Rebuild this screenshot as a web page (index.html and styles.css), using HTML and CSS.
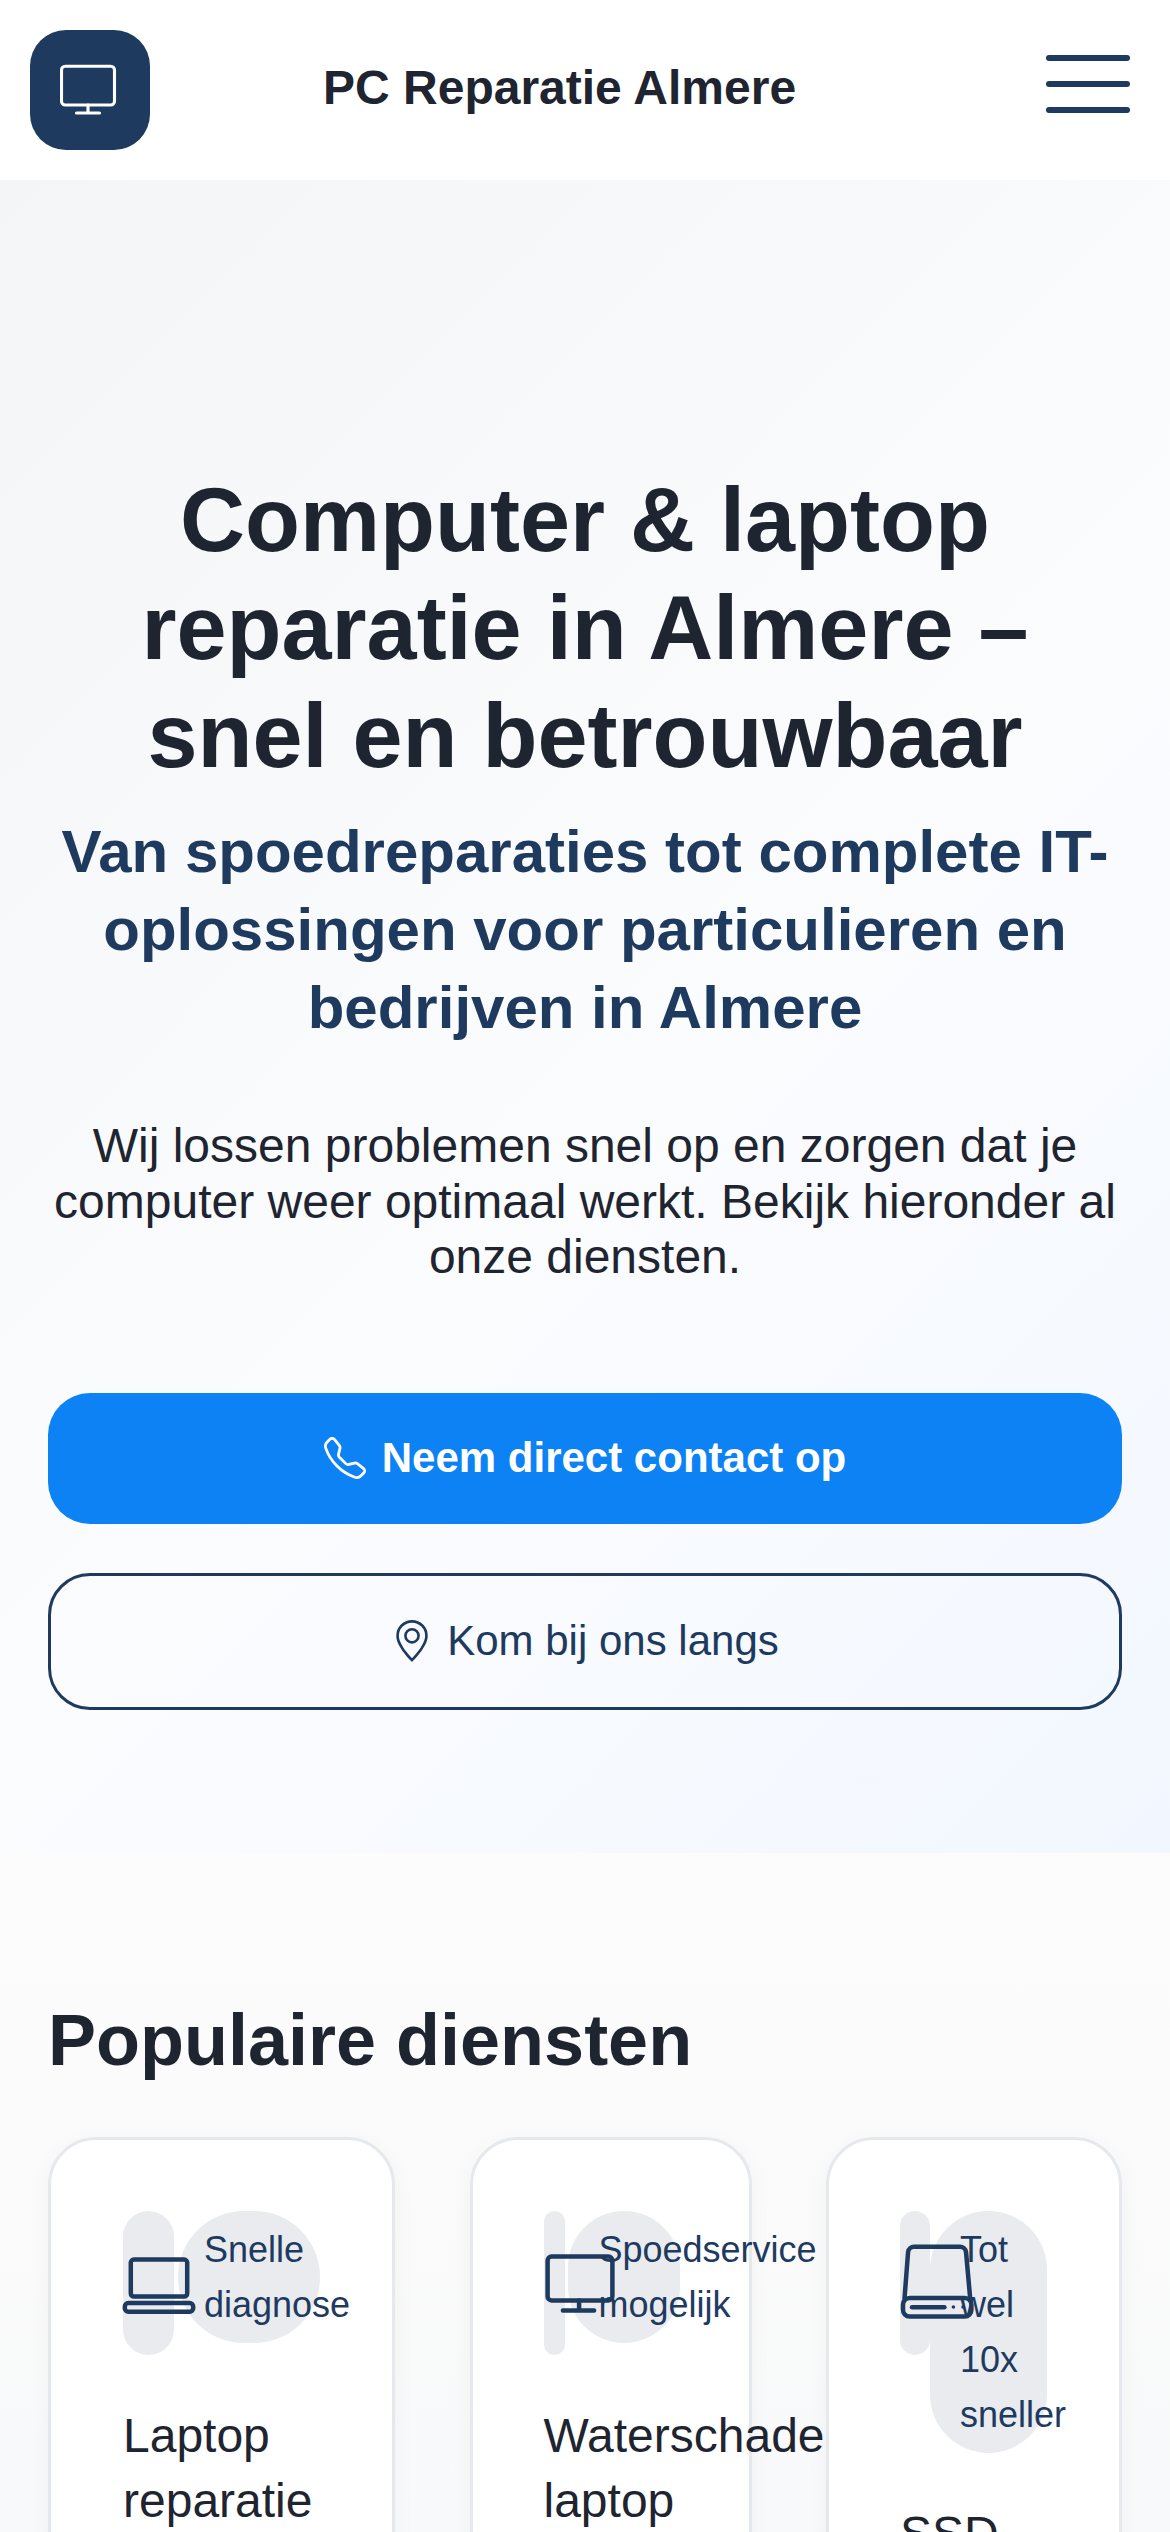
FILE: index.html
```html
<!DOCTYPE html>
<html lang="nl">
<head>
    <meta charset="UTF-8">
    <meta name="viewport" content="width=device-width, initial-scale=1">
    <title>PC Reparatie Almere</title>
    <link rel="stylesheet" href="styles.css">
</head>
<body>
    <div class="page">
        <!-- Header -->
        <header class="site-header">
            <a class="logo" href="#">
                <svg class="logo-icon" viewBox="0 0 24 24">
                    <rect x="0.6" y="2.5" width="21.2" height="15.5" rx="1.5"/>
                    <path d="M11.2 18v3.2M6.6 21.2h9.2"/>
                </svg>
            </a>
            <span class="site-title">PC Reparatie Almere</span>
            <button class="burger" type="button" aria-label="Menu">
                <span></span>
                <span></span>
                <span></span>
            </button>
        </header>

        <!-- Hero -->
        <section class="hero">
            <h1>Computer &amp; laptop reparatie in Almere – snel en betrouwbaar</h1>
            <h2 class="hero-sub">Van spoedreparaties tot complete IT-oplossingen voor particulieren en bedrijven in Almere</h2>
            <p class="hero-text">Wij lossen problemen snel op en zorgen dat je computer weer optimaal werkt. Bekijk hieronder al onze diensten.</p>
            <a class="btn btn-primary" href="#">
                <svg class="btn-icon" viewBox="0 0 16 16" fill="currentColor">
                    <path d="M3.654 1.328a.678.678 0 0 0-1.015-.063L1.605 2.3c-.483.484-.661 1.169-.45 1.77a17.6 17.6 0 0 0 4.168 6.608 17.6 17.6 0 0 0 6.608 4.168c.601.211 1.286.033 1.77-.45l1.034-1.034a.678.678 0 0 0-.063-1.015l-2.307-1.794a.68.68 0 0 0-.58-.122l-2.19.547a1.75 1.75 0 0 1-1.657-.459L5.482 8.062a1.75 1.75 0 0 1-.46-1.657l.548-2.19a.68.68 0 0 0-.122-.58zM1.884.511a1.745 1.745 0 0 1 2.612.163L6.29 2.98c.329.423.445.974.315 1.494l-.547 2.19a.68.68 0 0 0 .178.643l2.457 2.457a.68.68 0 0 0 .644.178l2.189-.547a1.75 1.75 0 0 1 1.494.315l2.306 1.794c.829.645.905 1.87.163 2.611l-1.034 1.034c-.74.74-1.846 1.065-2.877.702a18.6 18.6 0 0 1-7.01-4.42 18.6 18.6 0 0 1-4.42-7.009c-.362-1.03-.037-2.137.703-2.877z"/>
                </svg>
                Neem direct contact op
            </a>
            <a class="btn btn-outline" href="#">
                <svg class="btn-icon" viewBox="0 0 16 16" fill="currentColor">
                    <path d="M12.166 8.94c-.524 1.062-1.234 2.12-1.96 3.07A32 32 0 0 1 8 14.58a32 32 0 0 1-2.206-2.57c-.726-.95-1.436-2.008-1.96-3.07C3.304 7.867 3 6.862 3 6a5 5 0 0 1 10 0c0 .862-.305 1.867-.834 2.94M8 16s6-5.686 6-10A6 6 0 0 0 2 6c0 4.314 6 10 6 10"/>
                    <path d="M8 8a2 2 0 1 1 0-4 2 2 0 0 1 0 4m0 1a3 3 0 1 0 0-6 3 3 0 0 0 0 6"/>
                </svg>
                Kom bij ons langs
            </a>
        </section>

        <!-- Diensten -->
        <section class="services">
            <h2 class="section-title">Populaire diensten</h2>
            <div class="card-grid">
                <article class="card card-laptop">
                    <div class="card-top">
                        <div class="icon-box">
                            <svg class="card-icon" viewBox="0 0 24 24">
                                <rect x="2.6" y="4.2" width="18.8" height="12.3" rx="1"/>
                                <rect x="0.6" y="18.7" width="22.8" height="2.9" rx="1.2"/>
                            </svg>
                        </div>
                        <span class="badge">Snelle diagnose</span>
                    </div>
                    <h3>Laptop reparatie</h3>
                </article>

                <article class="card card-water">
                    <div class="card-top">
                        <div class="icon-box">
                            <svg class="card-icon" viewBox="0 0 24 24">
                                <rect x="1.2" y="3.2" width="21.6" height="14.6" rx="1.3"/>
                                <path d="M11.7 17.8v3.4M6.3 21.2h10.4"/>
                            </svg>
                        </div>
                        <span class="badge">Spoedservice mogelijk</span>
                    </div>
                    <h3>Waterschade laptop</h3>
                </article>

                <article class="card card-ssd">
                    <div class="card-top">
                        <div class="icon-box">
                            <svg class="card-icon" viewBox="0 0 24 24">
                                <path d="M1.5 17.2 2.7 1.6A2 2 0 0 1 4.7-.1H20a2 2 0 0 1 2 1.7l1.4 15.6"/>
                                <rect x="1" y="17" width="22.8" height="6.2" rx="2.2"/>
                                <path d="M4 20.1h10.8"/>
                                <circle class="dot" cx="17.8" cy="20" r="0.6"/>
                                <circle class="dot" cx="21" cy="20" r="0.6"/>
                            </svg>
                        </div>
                        <span class="badge">Tot wel 10x sneller</span>
                    </div>
                    <h3>SSD upgrade</h3>
                </article>
            </div>
        </section>
    </div>
</body>
</html>
```

FILE: styles.css
```css
html, body {
    margin: 0;
    padding: 0;
}
body {
    font-family: "Liberation Sans", Arial, sans-serif;
    color: #1f2530;
    background-color: #fff;
}
a {
    text-decoration: none;
}
.page {
    height: 2532px;
    overflow: hidden;
}

/* Header */
.site-header {
    display: flex;
    align-items: center;
    height: 180px;
    box-sizing: border-box;
    padding: 0 40px 0 30px;
    background-color: #fff;
}
.logo {
    display: flex;
    align-items: center;
    justify-content: center;
    width: 120px;
    height: 120px;
    border-radius: 36px;
    background-color: #1e3a5f;
}
.logo-icon {
    width: 60px;
    height: 60px;
    fill: none;
    stroke: #fff;
    stroke-width: 1.25;
    stroke-linecap: round;
}
.site-title {
    margin: 0 0 6px 173px;
    font-size: 48px;
    font-weight: bold;
}
.burger {
    display: flex;
    flex-direction: column;
    gap: 20px;
    margin: 0 0 12px auto;
    padding: 0;
    border: none;
    background: none;
}
.burger span {
    display: block;
    width: 84px;
    height: 6px;
    border-radius: 3px;
    background-color: #1e3a5f;
}

/* Hero */
.hero {
    box-sizing: border-box;
    height: 1673px;
    padding: 286px 48px 0;
    text-align: center;
    background: linear-gradient(135deg, #f3f5f6 0%, #fbfcfe 55%, #f2f7ff 100%);
}
.hero h1 {
    margin: 0 0 23px;
    font-size: 90px;
    line-height: 108px;
    font-weight: bold;
}
.hero-sub {
    margin: 0 0 71px;
    font-size: 60px;
    line-height: 78px;
    font-weight: bold;
    color: #1e3a5f;
}
.hero-text {
    margin: 0 0 108px;
    font-size: 48px;
    line-height: 55.5px;
}
.btn {
    display: flex;
    align-items: center;
    justify-content: center;
    box-sizing: border-box;
    border-radius: 42px;
    font-size: 42px;
}
.btn-primary {
    height: 131px;
    margin-bottom: 49px;
    gap: 16px;
    background-color: #0d82f5;
    color: #fff;
    font-weight: bold;
}
.btn-outline {
    height: 137px;
    gap: 14px;
    border: 3px solid #1e3a5f;
    color: #1e3a5f;
}
.btn-icon {
    width: 42px;
    height: 42px;
}

/* Diensten */
.services {
    padding: 144px 48px 0;
    background: linear-gradient(180deg, #fcfcfc 0%, #f6f7f9 100%);
    height: 1000px;
}
.section-title {
    margin: 0 0 54px;
    font-size: 72px;
    line-height: 86px;
    font-weight: bold;
}
.card-grid {
    display: grid;
    grid-template-columns: 347px 282px 296px;
    gap: 74.5px;
}
.card {
    box-sizing: border-box;
    padding: 71px 71px 72px;
    border: 3px solid #e5e8ec;
    border-radius: 48px;
    background-color: #fff;
    box-shadow: 0 6px 24px rgba(0, 0, 0, 0.04);
}
.card-top {
    display: flex;
    align-items: flex-start;
    margin-bottom: 48px;
}
.icon-box {
    display: flex;
    align-items: center;
    flex: none;
    height: 144px;
    border-radius: 72px;
    background-color: #e9ebef;
}
.card-icon {
    position: relative;
    z-index: 1;
    flex: none;
    width: 72px;
    height: 72px;
    overflow: visible;
    fill: none;
    stroke: #1e3a5f;
    stroke-width: 1.5;
    stroke-linecap: round;
    stroke-linejoin: round;
}
.card-icon .dot {
    fill: #1e3a5f;
    stroke: none;
}
.badge {
    flex: none;
    box-sizing: border-box;
    padding: 11px 0 11px 26px;
    border-radius: 72px;
    background-color: #e9ebef;
    font-size: 36px;
    line-height: 55px;
    color: #1e3a5f;
}
.card h3 {
    margin: 0;
    font-size: 48px;
    line-height: 65px;
    font-weight: normal;
}

/* De kolommen zijn niet even breed */
.card-laptop {
    padding-left: 72px;
}
.card-laptop .icon-box {
    width: 51px;
}
.card-laptop .badge {
    width: 142px;
    margin-left: 4px;
}
.card-water .icon-box {
    width: 21px;
}
.card-water .badge {
    width: 112px;
    margin-left: 3px;
    padding-left: 31px;
}
.card-ssd .icon-box {
    width: 30px;
}
.card-ssd .badge {
    width: 117px;
    padding-left: 30px;
}
```
